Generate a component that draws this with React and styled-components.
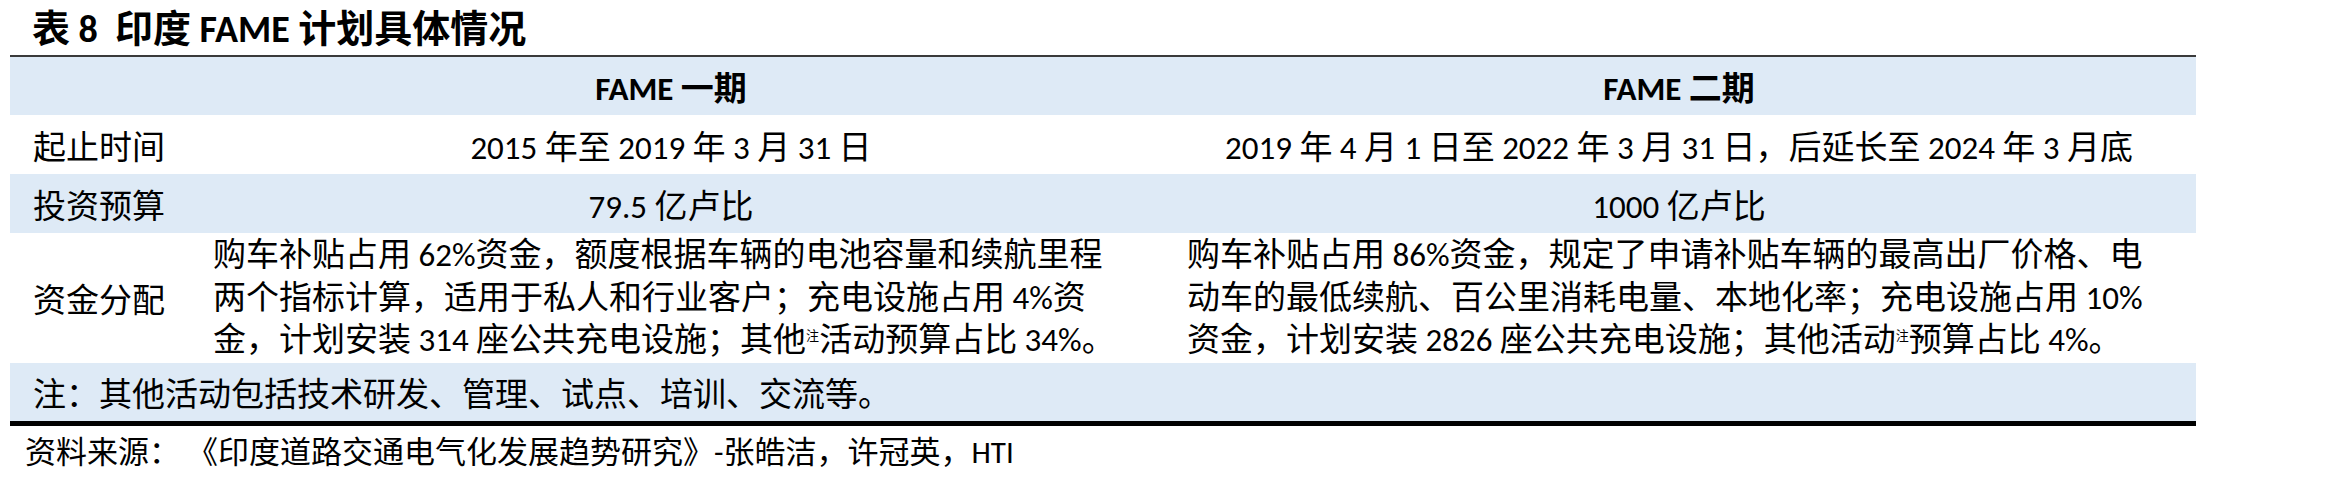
import React from "react";
import styled, { createGlobalStyle } from "styled-components";

const GlobalStyle = createGlobalStyle`
  html, body { margin: 0; padding: 0; background: #ffffff; }
  body {
    font-family: "Carlito", "Lato", "Noto Sans CJK SC", sans-serif;
    color: #000000;
  }
`;

const Page = styled.div`
  width: 2186px;
  padding-left: 10px;
`;

const Title = styled.div`
  height: 55px;
  box-sizing: border-box;
  padding-left: 22px;
  padding-bottom: 5px;
  display: flex;
  align-items: center;
  font-size: 38px;
  font-weight: 700;
  white-space: pre;
`;

const Table = styled.div`
  display: grid;
  grid-template-columns: 170px 982px 1034px;
  border-top: 2px solid #3a3a3a;
  border-bottom: 5px solid #000000;
`;

const Cell = styled.div`
  background: ${(p) => (p.$shade ? "#deeaf6" : "#ffffff")};
  height: ${(p) => p.$h}px;
  box-sizing: border-box;
  display: flex;
  flex-direction: column;
  justify-content: center;
  align-items: ${(p) => (p.$center ? "center" : "flex-start")};
  padding-left: ${(p) => p.$pl || 0}px;
  grid-column: ${(p) => (p.$span ? `span ${p.$span}` : "auto")};
  font-size: 33px;
  font-weight: ${(p) => (p.$bold ? 700 : 400)};
  white-space: pre;
`;

const Line = styled.span`
  display: block;
  line-height: 42.5px;
  white-space: pre;
`;

const Note = styled.sup`
  font-size: 13px;
  vertical-align: top;
  position: relative;
  top: -4px;
`;

const Source = styled.div`
  height: 46px;
  padding-left: 15px;
  display: flex;
  align-items: center;
  font-size: 31px;
  white-space: pre;
`;

export default function App() {
  return (
    <>
      <GlobalStyle />
      <Page>
        <Title>表 8  印度 FAME 计划具体情况</Title>
        <Table>
          <Cell $shade $h={58} />
          <Cell $shade $h={58} $center $bold>FAME 一期</Cell>
          <Cell $shade $h={58} $center $bold>FAME 二期</Cell>

          <Cell $h={59} $pl={23}>起止时间</Cell>
          <Cell $h={59} $center>2015 年至 2019 年 3 月 31 日</Cell>
          <Cell $h={59} $center>2019 年 4 月 1 日至 2022 年 3 月 31 日，后延长至 2024 年 3 月底</Cell>

          <Cell $shade $h={59} $pl={23}>投资预算</Cell>
          <Cell $shade $h={59} $center>79.5 亿卢比</Cell>
          <Cell $shade $h={59} $center>1000 亿卢比</Cell>

          <Cell $h={130} $pl={23}>资金分配</Cell>
          <Cell $h={130} $pl={33}>
            <Line>购车补贴占用 62%资金，额度根据车辆的电池容量和续航里程</Line>
            <Line>两个指标计算，适用于私人和行业客户；充电设施占用 4%资</Line>
            <Line>金，计划安装 314 座公共充电设施；其他<Note>注</Note>活动预算占比 34%。</Line>
          </Cell>
          <Cell $h={130} $pl={25}>
            <Line>购车补贴占用 86%资金，规定了申请补贴车辆的最高出厂价格、电</Line>
            <Line>动车的最低续航、百公里消耗电量、本地化率；充电设施占用 10%</Line>
            <Line>资金，计划安装 2826 座公共充电设施；其他活动<Note>注</Note>预算占比 4%。</Line>
          </Cell>

          <Cell $shade $h={58} $pl={23} $span={3}>注：其他活动包括技术研发、管理、试点、培训、交流等。</Cell>
        </Table>
        <Source>资料来源： 《印度道路交通电气化发展趋势研究》-张皓洁，许冠英，HTI</Source>
      </Page>
    </>
  );
}
